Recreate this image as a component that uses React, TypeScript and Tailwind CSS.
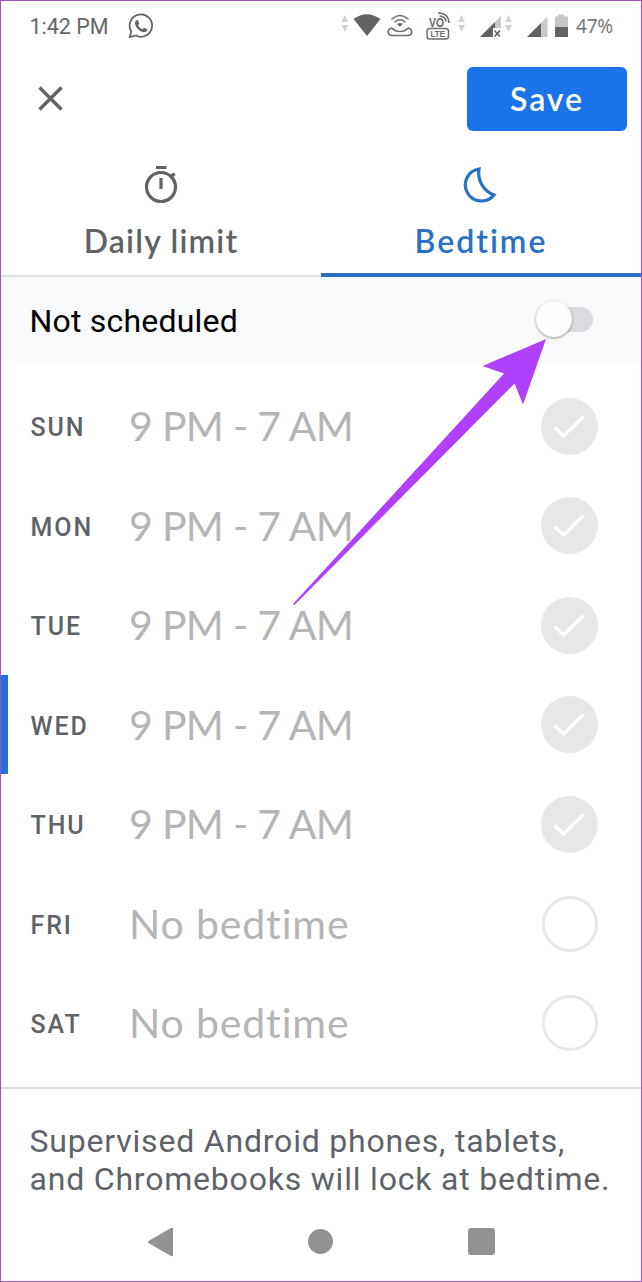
import React from 'react';

const days = [
  { day: 'SUN', time: '9 PM - 7 AM', on: true },
  { day: 'MON', time: '9 PM - 7 AM', on: true },
  { day: 'TUE', time: '9 PM - 7 AM', on: true },
  { day: 'WED', time: '9 PM - 7 AM', on: true, today: true },
  { day: 'THU', time: '9 PM - 7 AM', on: true },
  { day: 'FRI', time: 'No bedtime', on: false },
  { day: 'SAT', time: 'No bedtime', on: false },
];

function StatusIcons() {
  return (
    <svg width="236" height="40" viewBox="336 5 236 40" fill="none" className="shrink-0">
      <g fill="#d2d2d2">
        <path d="M345 14l3.500 7h-7zM345 31l3.500-7h-7z" />
        <path d="M461.500 14l3.500 7h-7zM461.500 31l3.500-7h-7z" />
        <path d="M508.500 14l3.500 7h-7zM508.500 31l3.500-7h-7z" />
      </g>
      <path d="M353.500 18Q366.500 8.500 380.500 18L367 35z" fill="#636363" />
      <g stroke="#6d6d6d" strokeWidth="1.600" strokeLinecap="round">
        <path d="M392 18Q400 11 408 18M395 21Q400 16.500 405 21" />
        <path d="M397.500 23Q400 21.500 402.500 23L400 25.500z" fill="#666" strokeWidth=".6" />
        <path d="M391.500 27C386.500 29 387.500 34 392 34.500H408C412.500 34 413.500 29 408.500 27L405 29.500Q400 31.500 395 29.500Z" strokeLinejoin="round" />
      </g>
      <text x="429" y="25.500" fontFamily="Liberation Sans, sans-serif" fontSize="12" fontWeight="700" fill="#686868" textLength="15" lengthAdjust="spacingAndGlyphs">VO</text>
      <g stroke="#707070" strokeWidth="1.500">
        <path d="M438 12Q448.500 12 449 22M439.500 15Q445.500 15.500 446 20.500" />
        <rect x="427" y="27.500" width="21.500" height="10.500" rx="2.800" />
      </g>
      <text x="430.500" y="36" fontFamily="Liberation Sans, sans-serif" fontSize="9.200" fontWeight="700" fill="#6b6b6b" textLength="14.500" lengthAdjust="spacingAndGlyphs">LTE</text>
      <path d="M480 36L501 15V27H493V36z" fill="#c9c9c9" />
      <path d="M480 36L495 21V27H493V36z" fill="#626262" />
      <path d="M494.500 29.500l5.500 6M500 29.500l-5.500 6" stroke="#626262" strokeWidth="1.700" />
      <path d="M527 36L547.500 15.500V36z" fill="#c9c9c9" />
      <path d="M527 36L541 22V36z" fill="#626262" />
      <path d="M558 13.500h6v2h4V26h-13V15.500h3z" fill="#c7c7c7" />
      <path d="M555 26h13v10h-13z" fill="#626262" />
    </svg>
  );
}

function WhatsApp() {
  return (
    <svg width="26" height="26" viewBox="0 0 26 26" fill="none" className="ml-[20px] shrink-0">
      <path d="M1.600 24.200L3.300 18.400A11.200 11.200 0 1 1 7.700 22.500Z" stroke="#636363" strokeWidth="1.800" strokeLinejoin="round" />
      <path d="M8.200 7.200L9.700 7L11.300 10.600L10 12.300Q11.500 15.200 14.400 16.300L16 14.700L19.400 16.300Q19.200 19.200 15.700 19.200Q11.500 18.800 8.500 14.300Q5.500 9.800 8.200 7.200Z" fill="#636363" />
    </svg>
  );
}

function DayToggle({ on }: { on: boolean }) {
  if (!on) return <div className="size-14 rounded-full border-[3.5px] border-[#e7e7e7]" />;
  return (
    <div className="size-[57px] rounded-full bg-[#e6e8e7]">
      <svg width="57" height="57" viewBox="0 0 57 57" fill="none">
        <path d="M13.500 29.500L22.500 38L42.500 18.500" stroke="#fdfdfd" strokeWidth="3.400" />
      </svg>
    </div>
  );
}

export default function App() {
  return (
    <div className="relative flex h-[1282px] w-[642px] flex-col overflow-hidden border border-[#9a55b5] bg-white font-['Roboto',sans-serif]">
      <header className="flex h-[49px] shrink-0 items-center justify-between">
        <div className="flex items-center pl-[28.5px]">
          <span className="w-[78px] pt-[2px] text-[21.5px] leading-6 whitespace-nowrap text-[#666]">1:42 PM</span>
          <WhatsApp />
        </div>
        <div className="flex items-center pr-[27px]">
          <StatusIcons />
          <span className="ml-[4px] w-[38px] font-['Noto_Sans',sans-serif] text-[19px] leading-6 tracking-[-0.2px] whitespace-nowrap text-[#777]">47%</span>
        </div>
      </header>

      <div className="flex h-[97px] shrink-0 items-center justify-between pt-px pr-[14px] pl-[37px]">
        <button aria-label="Close" className="pb-px">
          <svg width="25" height="25" viewBox="0 0 25 25" stroke="#5f6368" strokeWidth="3.400">
            <path d="M1.500 1.500L23.500 23.500M23.500 1.500L1.500 23.500" />
          </svg>
        </button>
        <button className="h-16 w-40 rounded-md bg-[#1a73e8] font-['Lato',sans-serif] text-[32px] font-semibold tracking-[1.9px] text-white">Save</button>
      </div>

      <nav className="flex h-[130px] shrink-0 font-['Lato',sans-serif] text-[32px] leading-10">
        <div className="flex flex-1 flex-col items-center border-b-2 border-[#dcdee1] pt-[17px] font-semibold text-[#5f6368]">
          <svg width="34" height="40" viewBox="0 0 34 40" fill="none" stroke="#5f6368">
            <path d="M12 3.500h10.500M17 14v11" strokeWidth="3.200" />
            <circle cx="17" cy="23" r="14.500" strokeWidth="3.200" />
            <path d="M26.500 13.500l4-4" strokeWidth="3.200" />
          </svg>
          <span className="mt-[17px] tracking-[1.2px] whitespace-nowrap">Daily limit</span>
        </div>
        <div className="flex flex-1 flex-col items-center border-b-4 border-[#2a70c5] pt-[17px] font-semibold text-[#2a70c5]">
          <svg width="36" height="40" viewBox="0 0 36 40" fill="none">
            <path d="M16 5A16.100 16.100 0 1 0 31 31C22 27.500 14 18 16 5Z" stroke="#2a70c5" strokeWidth="3.200" />
          </svg>
          <span className="mt-[17px] tracking-[2px] whitespace-nowrap">Bedtime</span>
        </div>
      </nav>

      <section className="flex h-[84px] shrink-0 items-center justify-between bg-[#f8f9fb] pr-[48px] pl-[28.5px]">
        <span className="pt-[3px] text-[32px] leading-10 tracking-[0.2px] whitespace-nowrap text-black">Not scheduled</span>
        <div className="flex w-[57px] items-center">
          <div className="z-10 size-9 shrink-0 rounded-full bg-[#fcfcfc] shadow-[0_1px_3px_rgba(0,0,0,0.4)]" />
          <div className="-ml-5 h-[25px] w-[41px] shrink-0 rounded-full bg-[#dadbdf]" />
        </div>
      </section>

      <main className="flex h-[728px] shrink-0 flex-col border-b-2 border-[#dcdcdd] pt-[15px]">
        {days.map(({ day, time, on, today }) => (
          <div key={day} className="flex h-[99.5px] shrink-0 items-center">
            <div className={today ? 'h-full w-[7px] bg-[#2472df]' : 'w-[7px]'} />
            <span className="w-[100px] pt-[5px] pl-[22.5px] text-[25px] leading-8 font-medium tracking-[1.9px] text-[#5f6368]">{day}</span>
            <span className={`flex-1 pt-px pl-[21px] font-['Lato',sans-serif] text-[41px] leading-[50px] whitespace-nowrap text-[#b5b5b5] ${on ? 'tracking-[-0.7px]' : 'tracking-[0.85px]'}`}>{time}</span>
            <div className="mr-[14px] flex w-[115px] justify-center pt-px">
              <DayToggle on={on} />
            </div>
          </div>
        ))}
      </main>

      <p className="mt-[34px] shrink-0 pl-[28.5px] text-[32px] leading-[37.5px] tracking-[0.8px] whitespace-nowrap text-[#5f6368]">
        Supervised Android phones, tablets,<br />and Chromebooks will lock at bedtime.
      </p>

      <footer className="mt-[23.5px] flex h-[40px] shrink-0 items-center justify-between pr-[146px] pl-[145.5px]">
        <svg width="27" height="30" viewBox="0 0 27 30" fill="#929292">
          <path d="M1.500 14Q0 15 1.500 16L24 29Q26 30 26 28V2Q26 0 24 1Z" />
        </svg>
        <div className="size-[25px] rounded-full bg-[#929292]" />
        <div className="size-[27px] rounded-[3px] bg-[#929292]" />
      </footer>

      <svg className="pointer-events-none absolute -top-px -left-px" width="642" height="1282" viewBox="0 0 642 1282">
        <path d="M546 339L482.500 366L504 373.500L293 604L294.500 605L514.500 383.500L523 404.500Z" fill="#b040fc" />
      </svg>
    </div>
  );
}
